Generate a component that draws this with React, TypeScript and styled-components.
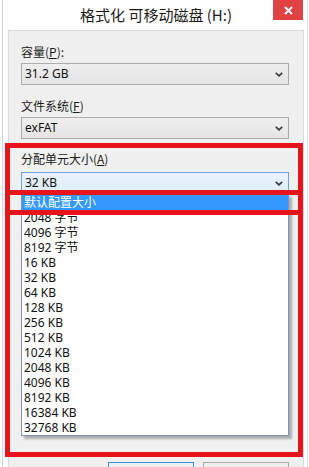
import React from "react";
import styled, { createGlobalStyle } from "styled-components";

const Global = createGlobalStyle`
  html, body { margin: 0; padding: 0; background: #ffffff; }
  body { font-family: "Noto Sans", "Noto Sans CJK SC", sans-serif; }
`;

const Window = styled.div`
  position: relative;
  width: 304px;
  height: 467px;
  margin: 0 1px 0 2px;
  border-left: 1px solid #d4d4d4;
  border-right: 1px solid #e2e2e2;
  background: #ffffff;
  overflow: hidden;
  display: flex;
  flex-direction: column;
`;

const TitleBar = styled.div`
  height: 30px;
  flex: none;
  display: grid;
  grid-template-columns: 1fr auto 1fr;
  align-items: start;
`;

const Title = styled.div`
  grid-column: 2;
  margin-top: 5px;
  margin-left: 2px;
  font-family: "Noto Sans CJK SC", "Noto Sans", sans-serif;
  font-size: 15px;
  line-height: 20px;
  color: #1a1a1a;
  white-space: nowrap;
`;

const CloseButton = styled.div`
  grid-column: 3;
  justify-self: end;
  margin-right: 4px;
  width: 30px;
  height: 20px;
  background: #e04343;
  display: flex;
  align-items: center;
  justify-content: center;
`;

const Panel = styled.div`
  margin: 0 3px 0 5px;
  height: 460px;
  flex: none;
  box-sizing: border-box;
  border: 1px solid #dadada;
  background: #f0f0f0;
  padding: 13px 14px 4px 12px;
  display: flex;
  flex-direction: column;
`;

const Label = styled.div<{ $gap: number }>`
  margin-top: ${(p) => p.$gap}px;
  font-family: "Noto Sans CJK SC", "Noto Sans", sans-serif;
  font-size: 12px;
  line-height: 16px;
  color: #1a1a1a;
  u { text-decoration: underline; text-underline-offset: 1px; }
`;

const ComboWrap = styled.div<{ $gap: number }>`
  position: relative;
  margin-top: ${(p) => p.$gap}px;
`;

const Combo = styled.div<{ $open?: boolean }>`
  height: 22px;
  box-sizing: border-box;
  border: 1px solid ${(p) => (p.$open ? "#6aa5e0" : "#adadad")};
  background: ${(p) =>
    p.$open
      ? "linear-gradient(#eaf3fc, #dcecfc)"
      : "linear-gradient(#efefef, #e5e5e5)"};
  padding: 0 5px 0 3px;
  display: flex;
  align-items: center;
  justify-content: space-between;
  font-size: 12px;
  color: #111;
`;

const ComboText = styled.span`
  line-height: 20px;
`;

const Popup = styled.div`
  position: absolute;
  left: 0;
  right: 0;
  top: 100%;
  background: #ffffff;
  border: 1px solid #8093bd;
  box-shadow: 3px 3px 2px rgba(0, 0, 0, 0.28);
  display: flex;
  flex-direction: column;
  z-index: 2;
`;

const Item = styled.div<{ $selected?: boolean }>`
  height: 15px;
  line-height: 15px;
  padding-left: 2px;
  font-family: "Noto Sans", "Noto Sans CJK SC", sans-serif;
  font-size: 12px;
  color: ${(p) => (p.$selected ? "#ffffff" : "#111111")};
  background: ${(p) => (p.$selected ? "#3399ff" : "transparent")};
  white-space: nowrap;
`;

const ButtonRow = styled.div`
  margin-top: auto;
  display: flex;
  justify-content: flex-end;
  gap: 9px;
`;

const Button = styled.div<{ $default?: boolean }>`
  width: 86px;
  height: 23px;
  box-sizing: border-box;
  border: 1px solid ${(p) => (p.$default ? "#3c8fd6" : "#adadad")};
  background: linear-gradient(#f0f0f0, #e5e5e5);
  font-size: 12px;
  display: flex;
  align-items: center;
  justify-content: center;
  color: #111;
`;

const RedFrame = styled.div`
  position: absolute;
  left: 2px;
  top: 143px;
  width: 298px;
  height: 314px;
  box-sizing: border-box;
  border: 5px solid #e8141b;
  display: flex;
  flex-direction: column;
  pointer-events: none;
  z-index: 5;
`;

const Gap = styled.div<{ $h: number }>`
  height: ${(p) => p.$h}px;
  flex: none;
`;

const RedBar = styled.div`
  height: 5px;
  flex: none;
  background: #e8141b;
`;

const Chevron = () => (
  <svg width="8" height="5" viewBox="0 0 8 5">
    <path d="M0.8 0.8 L4 3.8 L7.2 0.8" fill="none" stroke="#3a3a3a" strokeWidth="1.7" />
  </svg>
);

const CloseIcon = () => (
  <svg width="9" height="9" viewBox="0 0 9 9">
    <path d="M1 1 L8 8 M8 1 L1 8" stroke="#ffffff" strokeWidth="1.8" />
  </svg>
);

const sizes = [
  "2048 字节",
  "4096 字节",
  "8192 字节",
  "16 KB",
  "32 KB",
  "64 KB",
  "128 KB",
  "256 KB",
  "512 KB",
  "1024 KB",
  "2048 KB",
  "4096 KB",
  "8192 KB",
  "16384 KB",
  "32768 KB",
];

export default function App() {
  return (
    <>
      <Global />
      <Window>
        <TitleBar>
          <Title>格式化 可移动磁盘 (H:)</Title>
          <CloseButton>
            <CloseIcon />
          </CloseButton>
        </TitleBar>
        <Panel>
          <Label $gap={0}>
            容量(<u>P</u>):
          </Label>
          <ComboWrap $gap={3}>
            <Combo>
              <ComboText>31.2 GB</ComboText>
              <Chevron />
            </Combo>
          </ComboWrap>
          <Label $gap={13}>
            文件系统(<u>F</u>)
          </Label>
          <ComboWrap $gap={3}>
            <Combo>
              <ComboText>exFAT</ComboText>
              <Chevron />
            </Combo>
          </ComboWrap>
          <Label $gap={12}>
            分配单元大小(<u>A</u>)
          </Label>
          <ComboWrap $gap={5}>
            <Combo $open>
              <ComboText>32 KB</ComboText>
              <Chevron />
            </Combo>
            <Popup>
              <Item $selected>默认配置大小</Item>
              {sizes.map((s) => (
                <Item key={s}>{s}</Item>
              ))}
            </Popup>
          </ComboWrap>
          <ButtonRow>
            <Button $default>开始(S)</Button>
            <Button>关闭(C)</Button>
          </ButtonRow>
        </Panel>
        <RedFrame>
          <Gap $h={42} />
          <RedBar />
          <Gap $h={15} />
          <RedBar />
        </RedFrame>
      </Window>
    </>
  );
}
